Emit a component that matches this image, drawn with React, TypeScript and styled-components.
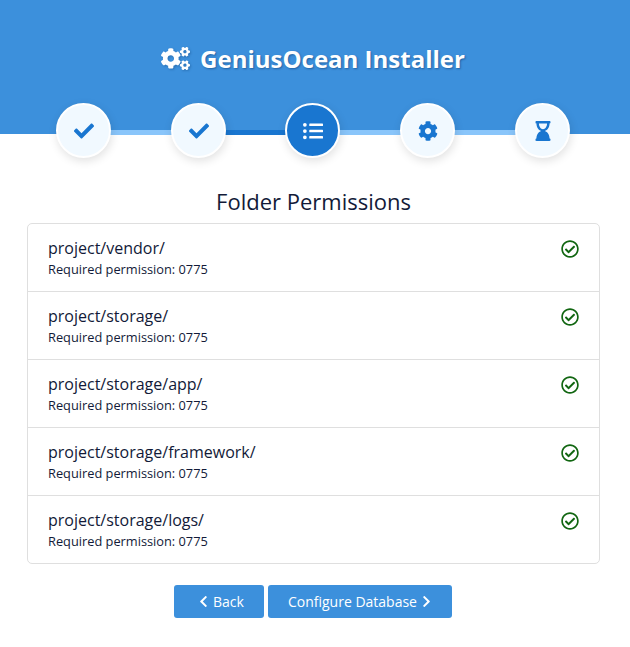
import React, { FC, ReactNode } from "react"
import styled, { createGlobalStyle } from "styled-components"
import {
  FaCheck,
  FaChevronLeft,
  FaChevronRight,
  FaCog,
  FaCogs,
  FaHourglassEnd,
  FaListUl,
  FaRegCheckCircle
} from "react-icons/fa"

const GlobalStyle = createGlobalStyle`
  * {
    box-sizing: border-box;
  }
  body {
    margin: 0;
    background: rgb(255, 255, 255);
    font-family: "Open Sans", "Liberation Sans", sans-serif;
    color: rgb(33, 37, 41);
  }
`

const Header = styled.header`
  height: 134px;
  padding-top: 42px;
  background: rgb(60, 144, 220);
`

const Title = styled.h1`
  display: flex;
  align-items: center;
  justify-content: center;
  gap: 10px;
  margin: 0;
  padding-right: 4px;
  height: 33px;
  font-size: 24px;
  font-weight: 700;
  line-height: 33px;
  color: rgb(255, 255, 255);
  text-shadow: 1px 1px 2px rgba(0, 40, 90, 0.45);

  svg {
    font-size: 29px;
    filter: drop-shadow(1px 1px 1px rgba(0, 40, 90, 0.3));
  }
`

const Steps = styled.ol`
  display: flex;
  margin: -31px 0 0;
  padding: 0 30px 0 26px;
  list-style: none;
`

const Step = styled.li<{ $line?: string }>`
  position: relative;
  display: flex;
  flex: 1;
  justify-content: center;

  &::after {
    content: ${props => (props.$line ? '""' : "none")};
    position: absolute;
    top: 27px;
    left: 50%;
    width: 100%;
    height: 5px;
    background: ${props => props.$line};
  }
`

const Circle = styled.span<{ $active?: boolean }>`
  position: relative;
  z-index: 1;
  display: flex;
  align-items: center;
  justify-content: center;
  width: 55px;
  height: 55px;
  padding-left: 1px;
  font-size: 20px;
  color: ${props => (props.$active ? "rgb(255, 255, 255)" : "rgb(25, 118, 208)")};
  background: ${props => (props.$active ? "rgb(25, 118, 208)" : "rgb(241, 249, 255)")};
  border: 2px solid rgb(255, 255, 255);
  border-radius: 50%;
  box-shadow: 1px 3px 10px rgba(0, 0, 0, 0.12);
`

const Content = styled.main`
  padding: 0 30px 0 27px;
`

const Heading = styled.h2`
  margin: 0;
  padding-top: 27px;
  height: 65px;
  font-size: 22px;
  font-weight: 400;
  line-height: 32px;
  text-align: center;
  color: rgb(18, 26, 56);
`

const List = styled.ul`
  margin: 0;
  padding: 0;
  list-style: none;
  border: 1px solid rgb(223, 223, 223);
  border-radius: 5px;
`

const Row = styled.li`
  display: flex;
  justify-content: space-between;
  height: 68px;
  padding: 12px 20px 0;
  color: rgb(18, 26, 56);

  &:first-child {
    height: 67px;
  }

  & + & {
    border-top: 1px solid rgb(223, 223, 223);
  }
`

const Path = styled.div`
  font-size: 16px;
  line-height: 24px;
`

const Note = styled.div`
  font-size: 12.8px;
  line-height: 18px;
`

const Status = styled.span`
  display: flex;
  font-size: 18px;
  padding-top: 4px;
  color: rgb(17, 102, 17);
`

const Actions = styled.div`
  display: flex;
  justify-content: center;
  gap: 4px;
  margin-top: 21px;
  padding-right: 1px;
`

const Button = styled.a`
  display: flex;
  align-items: center;
  gap: 3px;
  height: 33px;
  padding: 0 19px 0 20px;
  font-size: 14px;
  color: rgb(255, 255, 255);
  text-decoration: none;
  background: rgb(60, 144, 220);
  border-radius: 3px;

  svg {
    font-size: 13px;
  }
`

const BackButton = styled(Button)`
  padding: 0 20px 0 23px;
`

interface FolderProps {
  path: string
}

const Folder: FC<FolderProps> = ({ path }) => (
  <Row>
    <div>
      <Path>{path}</Path>
      <Note>Required permission: 0775</Note>
    </div>
    <Status>
      <FaRegCheckCircle />
    </Status>
  </Row>
)

const steps: { icon: ReactNode; line?: string; active?: boolean }[] = [
  { icon: <FaCheck />, line: "rgb(137, 197, 250)" },
  { icon: <FaCheck />, line: "rgb(25, 118, 208)" },
  { icon: <FaListUl />, line: "rgb(137, 197, 250)", active: true },
  { icon: <FaCog />, line: "rgb(137, 197, 250)" },
  { icon: <FaHourglassEnd /> }
]

const folders = [
  "project/vendor/",
  "project/storage/",
  "project/storage/app/",
  "project/storage/framework/",
  "project/storage/logs/"
]

const App: FC = () => {
  return (
    <>
      <GlobalStyle />
      <Header>
        <Title>
          <FaCogs />
          GeniusOcean Installer
        </Title>
      </Header>
      <Steps>
        {steps.map((step, i) => (
          <Step key={i} $line={step.line}>
            <Circle $active={step.active}>{step.icon}</Circle>
          </Step>
        ))}
      </Steps>
      <Content>
        <Heading>Folder Permissions</Heading>
        <List>
          {folders.map(path => (
            <Folder key={path} path={path} />
          ))}
        </List>
        <Actions>
          <BackButton href="#">
            <FaChevronLeft />
            Back
          </BackButton>
          <Button href="#">
            Configure Database
            <FaChevronRight />
          </Button>
        </Actions>
      </Content>
    </>
  )
}

export default App
